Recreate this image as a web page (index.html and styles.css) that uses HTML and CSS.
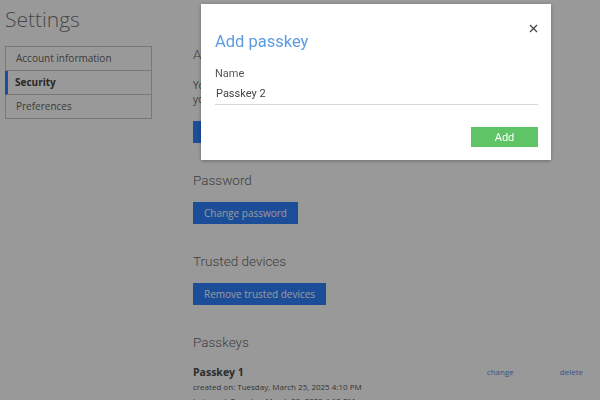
FILE: index.html
```html
<!DOCTYPE html>
<html lang="en">
<head>
<meta charset="utf-8">
<title>Settings</title>
<link rel="stylesheet" href="styles.css">
</head>
<body>
<div class="page">
  <h1 class="page-title">Settings</h1>
  <div class="layout">
    <nav class="sidenav">
      <a class="nav-item">Account information</a>
      <a class="nav-item active">Security</a>
      <a class="nav-item">Preferences</a>
    </nav>
    <main class="content">
      <section class="section">
        <h2 class="section-title">Authenticator app</h2>
        <p class="section-text">You can use an authenticator app to add an extra layer of security to<br>your account when you sign in.</p>
        <button class="btn">Set up authenticator</button>
      </section>
      <section class="section">
        <h2 class="section-title">Password</h2>
        <button class="btn">Change password</button>
      </section>
      <section class="section">
        <h2 class="section-title">Trusted devices</h2>
        <button class="btn">Remove trusted devices</button>
      </section>
      <section class="section">
        <h2 class="section-title">Passkeys</h2>
        <div class="passkey">
          <div class="passkey-info">
            <div class="passkey-name">Passkey 1</div>
            <div class="passkey-meta">created on: Tuesday, March 25, 2025 4:10 PM</div>
            <div class="passkey-meta">last used: Tuesday, March 25, 2025 4:12 PM</div>
          </div>
          <a class="link">change</a>
          <a class="link">delete</a>
        </div>
      </section>
    </main>
  </div>
</div>

<div class="backdrop"></div>
<div class="modal" role="dialog">
  <button class="modal-close" aria-label="Close">
    <svg width="9" height="9" viewBox="0 0 9 9"><path d="M1 1L8 8M8 1L1 8" stroke="#444" stroke-width="1.3" fill="none"/></svg>
  </button>
  <h2 class="modal-title">Add passkey</h2>
  <label class="field-label">Name</label>
  <div class="field-input">Passkey 2</div>
  <div class="modal-actions">
    <button class="btn-add">Add</button>
  </div>
</div>
</body>
</html>
```

FILE: styles.css
```css
html, body {
  margin: 0;
  padding: 0;
  background: #fff;
  height: 100%;
  overflow: hidden;
}
body {
  font-family: "Open Sans", sans-serif;
  color: #555;
}
.page {
  padding: 5px 0 0 5px;
}
.page-title {
  margin: 0;
  font-family: "Open Sans", sans-serif;
  font-weight: 300;
  font-size: 21px;
  line-height: 28px;
  color: #777;
}
.layout {
  display: flex;
  margin-top: 13px;
  gap: 41px;
}
.sidenav {
  width: 145px;
  flex: none;
  border: 1px solid #c8c8c8;
  display: flex;
  flex-direction: column;
  align-self: flex-start;
}
.nav-item {
  display: block;
  height: 23px;
  line-height: 23px;
  padding-left: 10px;
  font-size: 10px;
  color: #666;
  border-bottom: 1px solid #c8c8c8;
}
.nav-item:last-child {
  border-bottom: none;
}
.nav-item.active {
  font-weight: 700;
  color: #444;
  border-left: 3px solid #2f80ff;
  padding-left: 7px;
  margin-left: -1px;
}
.content {
  flex: 1;
  padding-right: 17px;
  margin-top: -2px;
}
.section {
  margin-bottom: 27px;
}
.section-title {
  margin: 0 0 12px;
  font-family: Roboto, sans-serif;
  font-weight: 300;
  font-size: 13.5px;
  line-height: 20px;
  color: #6a6a6a;
}
.section-text {
  margin: 14px 0 15px;
  font-size: 10px;
  line-height: 14px;
  color: #666;
}
.btn {
  display: block;
  height: 22px;
  padding: 0 11px;
  border: none;
  background: #2f80ff;
  color: #fff;
  font-family: "Open Sans", sans-serif;
  font-size: 10px;
}
.passkey {
  display: flex;
  align-items: flex-start;
  gap: 46px;
}
.passkey-info {
  flex: 1;
}
.passkey-name {
  font-size: 10.5px;
  font-weight: 700;
  line-height: 16px;
  color: #4a4a4a;
}
.passkey-meta {
  font-size: 8px;
  line-height: 14px;
  color: #5a5a5a;
}
.link {
  font-size: 8px;
  line-height: 16px;
  color: #5a8fdf;
}

.backdrop {
  position: fixed;
  inset: 0;
  background: rgba(0, 0, 0, 0.4);
}
.modal {
  position: fixed;
  left: 201px;
  top: 4px;
  width: 350px;
  height: 156px;
  box-sizing: border-box;
  padding: 27px 13px 0 14px;
  background: #fff;
  box-shadow: 0 1px 4px rgba(0, 0, 0, 0.3);
  font-family: Roboto, sans-serif;
}
.modal-close {
  position: absolute;
  top: 20px;
  right: 13px;
  width: 9px;
  height: 9px;
  padding: 0;
  border: none;
  background: none;
  display: flex;
}
.modal-close svg {
  display: block;
}
.modal-title {
  margin: 0;
  font-family: Roboto, sans-serif;
  font-weight: 400;
  font-size: 16.5px;
  line-height: 22px;
  color: #5c9be0;
}
.field-label {
  display: block;
  margin-top: 13px;
  font-size: 11px;
  line-height: 16px;
  color: #555;
}
.field-input {
  margin-top: 4px;
  padding: 0 0 0 1px;
  font-size: 11px;
  line-height: 16px;
  height: 18px;
  color: #444;
  border-bottom: 1px solid #d4d8de;
}
.modal-actions {
  display: flex;
  justify-content: flex-end;
  margin-top: 22px;
}
.btn-add {
  width: 67px;
  height: 20px;
  border: none;
  padding: 0;
  background: #5ec466;
  color: #fff;
  font-family: Roboto, sans-serif;
  font-size: 11px;
}
```
